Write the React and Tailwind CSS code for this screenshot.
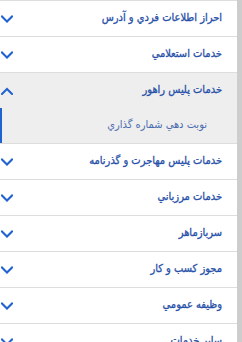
import React from "react";

const Chevron = ({ up }) => (
  <svg width="12" height="8" viewBox="0 0 12 8" className="shrink-0">
    <path
      d={up ? "M1 7 L6 2 L11 7" : "M1 1.5 L6 6.5 L11 1.5"}
      fill="none"
      stroke="#1f62d0"
      strokeWidth="2"
      strokeLinecap="square"
    />
  </svg>
);

const Row = ({ label, up }) => (
  <div className="flex h-[35px] items-center justify-between pl-[1px] pr-[15px]">
    <Chevron up={up} />
    <span
      className="text-[11px] text-[#2750a8] [-webkit-text-stroke:0.3px_#2750a8]"
      dir="rtl"
    >
      {label}
    </span>
  </div>
);

export default function App() {
  const items = ["احراز اطلاعات فردي و آدرس", "خدمات استعلامي"];
  const after = [
    "خدمات پليس مهاجرت و گذرنامه",
    "خدمات مرزباني",
    "سربازماهر",
    "مجوز کسب و کار",
    "وظيفه عمومي",
    "ساير خدمات",
  ];
  return (
    <div
      className="flex h-[342px] w-[242px] overflow-hidden bg-white"
      style={{ fontFamily: '"DejaVu Sans Condensed", "DejaVu Sans", sans-serif' }}
    >
      <div className="flex w-[237px] shrink-0 flex-col border-t border-[#dddddd]">
        {items.map((t) => (
          <div key={t} className="shrink-0 border-b border-[#dddddd] bg-white">
            <Row label={t} />
          </div>
        ))}
        <div className="shrink-0 border-b border-[#dddddd] bg-[#eeeeee]">
          <Row label="خدمات پليس راهور" up />
          <div className="flex h-[35px] items-center justify-end border-l-2 border-[#1f62d0] pr-[30px]">
            <span className="text-[11px] text-[#4a6cb0]" dir="rtl">
              نوبت دهي شماره گذاري
            </span>
          </div>
        </div>
        {after.map((t) => (
          <div key={t} className="shrink-0 border-b border-[#dddddd] bg-white">
            <Row label={t} />
          </div>
        ))}
      </div>
      <div className="w-[5px] shrink-0 bg-[#cdcdcd]" />
    </div>
  );
}
